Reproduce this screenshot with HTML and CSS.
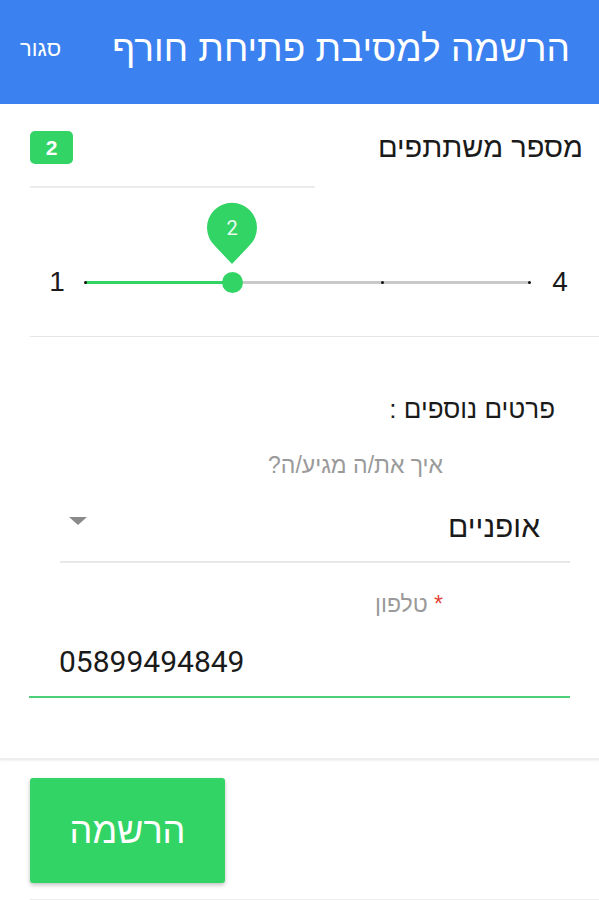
FILE: index.html
```html
<!DOCTYPE html>
<html lang="he" dir="rtl">
<head>
    <meta charset="UTF-8">
    <meta name="viewport" content="width=device-width, initial-scale=1.0">
    <title>הרשמה למסיבת פתיחת חורף</title>
    <link rel="stylesheet" href="styles.css">
</head>
<body>
    <header class="topbar">
        <h1 class="topbar-title">הרשמה למסיבת פתיחת חורף</h1>
        <span class="topbar-close">סגור</span>
    </header>

    <section class="count">
        <div class="count-head">
            <span class="count-label">מספר משתתפים</span>
            <span class="count-badge">2</span>
        </div>
        <div class="count-rule"></div>

        <div class="slider">
            <span class="slider-num">1</span>
            <div class="slider-track">
                <div class="slider-fill"></div>
                <span class="tick tick-1"></span>
                <span class="tick tick-3"></span>
                <span class="tick tick-4"></span>
                <div class="slider-thumb">
                    <svg class="slider-pin" width="52" height="62" viewBox="0 0 52 62">
                        <path d="M26 62 L9 44 A25 25 0 1 1 43 44 Z" fill="#33d466"/>
                        <text x="26" y="33" text-anchor="middle" class="pin-text">2</text>
                    </svg>
                </div>
            </div>
            <span class="slider-num">4</span>
        </div>
    </section>

    <section class="details">
        <div class="details-title">פרטים נוספים :</div>

        <div class="field">
            <div class="field-label">איך את/ה מגיע/ה?</div>
            <div class="select">
                <span class="select-value">אופניים</span>
                <span class="select-arrow"></span>
            </div>
        </div>

        <div class="field field-phone">
            <div class="field-label"><span class="req">*</span> טלפון</div>
            <div class="phone">05899494849</div>
        </div>
    </section>

    <footer class="actions">
        <button class="btn-register" type="submit">הרשמה</button>
    </footer>
</body>
</html>
```

FILE: styles.css
```css
body {
    margin: 0;
    font-family: 'Liberation Sans', 'DejaVu Sans', sans-serif;
    color: #1a1a1a;
    background: #fff;
    overflow: hidden;
}

.topbar {
    height: 104px;
    background-color: #3b82f0;
    color: #fff;
    display: flex;
    align-items: center;
    justify-content: space-between;
    padding: 0 29px 6px 20px;
    box-sizing: border-box;
}

.topbar-title {
    margin: 0;
    font-size: 37px;
    font-weight: normal;
}

.topbar-close {
    font-size: 22px;
}

/* participants block */
.count {
    padding-top: 26px;
    border-bottom: 1px solid #e6e6e6;
    margin-left: 30px;
}

.count-head {
    display: flex;
    align-items: center;
    justify-content: space-between;
    padding-right: 16px;
}

.count-label {
    font-size: 29px;
    line-height: 34px;
}

.count-badge {
    background-color: #33d466;
    color: #fff;
    font-weight: bold;
    font-size: 21px;
    width: 43px;
    height: 33px;
    line-height: 33px;
    text-align: center;
    border-radius: 5px;
}

.count-rule {
    width: 285px;
    margin-right: auto;
    margin-top: 22px;
    border-top: 2px solid #ececec;
}

.slider {
    direction: ltr;
    display: flex;
    align-items: center;
    padding: 78px 0 38px 15px;
}

.slider-num {
    font-size: 28px;
    width: 24px;
    text-align: center;
}

.slider-num:last-child {
    margin-left: 18px;
}

.slider-track {
    position: relative;
    flex: 0 0 445px;
    margin-left: 16px;
    height: 3px;
    background: #c9c9c9;
}

.slider-fill {
    width: 147px;
    height: 3px;
    background: #33d466;
}

.tick {
    position: absolute;
    top: 0;
    width: 3px;
    height: 3px;
    border-radius: 50%;
    background: #111;
}

.tick-1 { left: -1px; }
.tick-3 { left: 296px; }
.tick-4 { left: 443px; }

.slider-thumb {
    position: absolute;
    left: 137px;
    top: -9px;
    width: 21px;
    height: 21px;
    border-radius: 50%;
    background: #33d466;
}

.slider-pin {
    position: absolute;
    left: -16px;
    top: -70px;
}

.pin-text {
    font-family: 'Roboto', 'Liberation Sans', sans-serif;
    font-size: 20px;
    fill: #e9fbef;
}

/* extra details */
.details {
    padding-top: 57px;
    padding-bottom: 60px;
    border-bottom: 2px solid #eee;
    box-shadow: 0 1px 2px rgba(0, 0, 0, 0.06);
}

.details-title {
    font-size: 26px;
    line-height: 30px;
    padding-right: 44px;
}

.field {
    margin: 0 29px 0 29px;
}

.field-label {
    font-size: 23px;
    line-height: 27px;
    color: #9a9a9a;
    padding-right: 127px;
    margin-top: 28px;
}

.select {
    display: flex;
    align-items: center;
    justify-content: space-between;
    margin: 31px 0 0 31px;
    padding: 0 30px 17px 9px;
    border-bottom: 2px solid #e8e8e8;
}

.select-value {
    font-size: 30px;
    line-height: 34px;
}

.select-arrow {
    width: 0;
    height: 0;
    border-left: 9px solid transparent;
    border-right: 9px solid transparent;
    border-top: 8px solid #8a8a8a;
    margin-top: -12px;
}

.field-phone .field-label {
    margin-top: 28px;
}

.req {
    color: #e0453a;
}

.phone {
    direction: ltr;
    text-align: left;
    font-family: 'Roboto', 'Liberation Sans', sans-serif;
    font-size: 30px;
    line-height: 34px;
    padding: 27px 0 17px 30px;
    border-bottom: 2px solid #4ed07a;
}

/* submit */
.actions {
    padding: 18px 0 16px 0;
    margin-left: 30px;
    border-bottom: 2px solid #ececec;
}

.btn-register {
    display: block;
    margin-right: auto;
    width: 195px;
    height: 105px;
    border: none;
    border-radius: 3px;
    background-color: #33d466;
    color: #fff;
    font-family: 'Liberation Sans', 'DejaVu Sans', sans-serif;
    font-size: 36px;
    box-shadow: 0 2px 4px rgba(0, 0, 0, 0.25);
}
```
